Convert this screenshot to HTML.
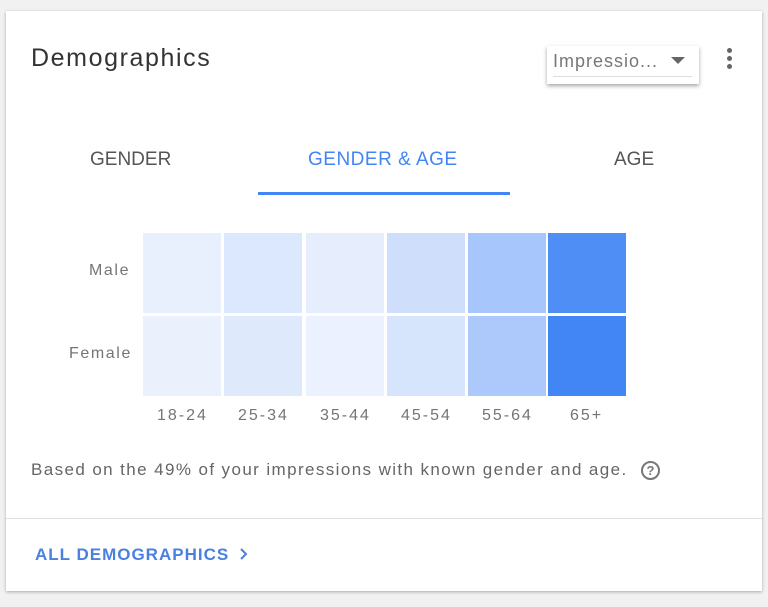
<!DOCTYPE html>
<html><head><style>
body{margin:0;background:#f1f1f1;font-family:"Liberation Sans",sans-serif;width:768px;height:607px;overflow:hidden;position:relative}
.card{position:absolute;left:6px;top:11px;width:756px;height:580px;background:#fff;box-shadow:0 1px 3px rgba(0,0,0,.3)}
.a{position:absolute;white-space:nowrap}
.cell{position:absolute;width:78px;height:80px}
.lbl{position:absolute;font-size:16px;color:#757575;letter-spacing:1.6px}
</style></head><body>
<div class="card"></div>
<div class="a" style="left:31px;top:44px;font-size:25px;color:#333;letter-spacing:1.6px">Demographics</div>
<div class="a" style="left:547px;top:46px;width:152px;height:38px;background:#fff;box-shadow:0 2px 4px rgba(0,0,0,.35)"></div>
<div class="a" style="left:553px;top:51px;font-size:18px;color:#777;letter-spacing:1px">Impressio...</div>
<div class="a" style="left:553px;top:76px;width:139px;height:1px;background:#ddd"></div>
<div class="a" style="left:671px;top:57px;width:0;height:0;border-left:7px solid transparent;border-right:7px solid transparent;border-top:7px solid #666"></div>
<div class="a" style="left:727px;top:48px;width:5px;height:5px;border-radius:50%;background:#666;box-shadow:0 8px 0 #666,0 16px 0 #666"></div>
<div class="a" style="left:90px;top:149px;font-size:19px;color:#555">GENDER</div>
<div class="a" style="left:308px;top:149px;font-size:19px;color:#4285f4;letter-spacing:0.5px">GENDER &amp; AGE</div>
<div class="a" style="left:614px;top:149px;font-size:19px;color:#555">AGE</div>
<div class="a" style="left:258px;top:192px;width:252px;height:3px;background:#4285f4"></div>
<div class="lbl" style="left:89px;top:262px">Male</div>
<div class="lbl" style="left:69px;top:345px">Female</div>
<div class="cell" style="left:143px;top:233px;background:#e8f0fd"></div>
<div class="cell" style="left:224px;top:233px;background:#dce8fd"></div>
<div class="cell" style="left:306px;top:233px;background:#e6eefd"></div>
<div class="cell" style="left:387px;top:233px;background:#cfdffb"></div>
<div class="cell" style="left:468px;top:233px;background:#a7c6fc"></div>
<div class="cell" style="left:548px;top:233px;background:#4f8ef5"></div>
<div class="cell" style="left:143px;top:316px;background:#eaf1fd"></div>
<div class="cell" style="left:224px;top:316px;background:#dfe9fc"></div>
<div class="cell" style="left:306px;top:316px;background:#ebf1fe"></div>
<div class="cell" style="left:387px;top:316px;background:#d6e4fc"></div>
<div class="cell" style="left:468px;top:316px;background:#adc8fa"></div>
<div class="cell" style="left:548px;top:316px;background:#4285f4"></div>
<div class="lbl" style="left:157px;top:407px;letter-spacing:2px">18-24</div>
<div class="lbl" style="left:238px;top:407px;letter-spacing:2px">25-34</div>
<div class="lbl" style="left:320px;top:407px;letter-spacing:2px">35-44</div>
<div class="lbl" style="left:401px;top:407px;letter-spacing:2px">45-54</div>
<div class="lbl" style="left:482px;top:407px;letter-spacing:2px">55-64</div>
<div class="lbl" style="left:570px;top:407px;letter-spacing:2px">65+</div>
<div class="a" style="left:31px;top:460px;font-size:17px;color:#666;letter-spacing:1.4px">Based on the 49% of your impressions with known gender and age.</div>
<div class="a" style="left:641px;top:461px;width:15px;height:15px;border:2px solid #777;border-radius:50%;font-size:13px;font-weight:bold;color:#777;text-align:center;line-height:15px">?</div>
<div class="a" style="left:6px;top:518px;width:756px;height:1px;background:#e0e0e0"></div>
<div class="a" style="left:35px;top:545px;font-size:17px;color:#4a80e0;font-weight:bold;letter-spacing:1px">ALL DEMOGRAPHICS</div>
<svg class="a" style="left:238px;top:546px" width="12" height="16"><path d="M3 3l5 5-5 5" stroke="#4a80e0" stroke-width="2" fill="none"/></svg>
</body></html>
